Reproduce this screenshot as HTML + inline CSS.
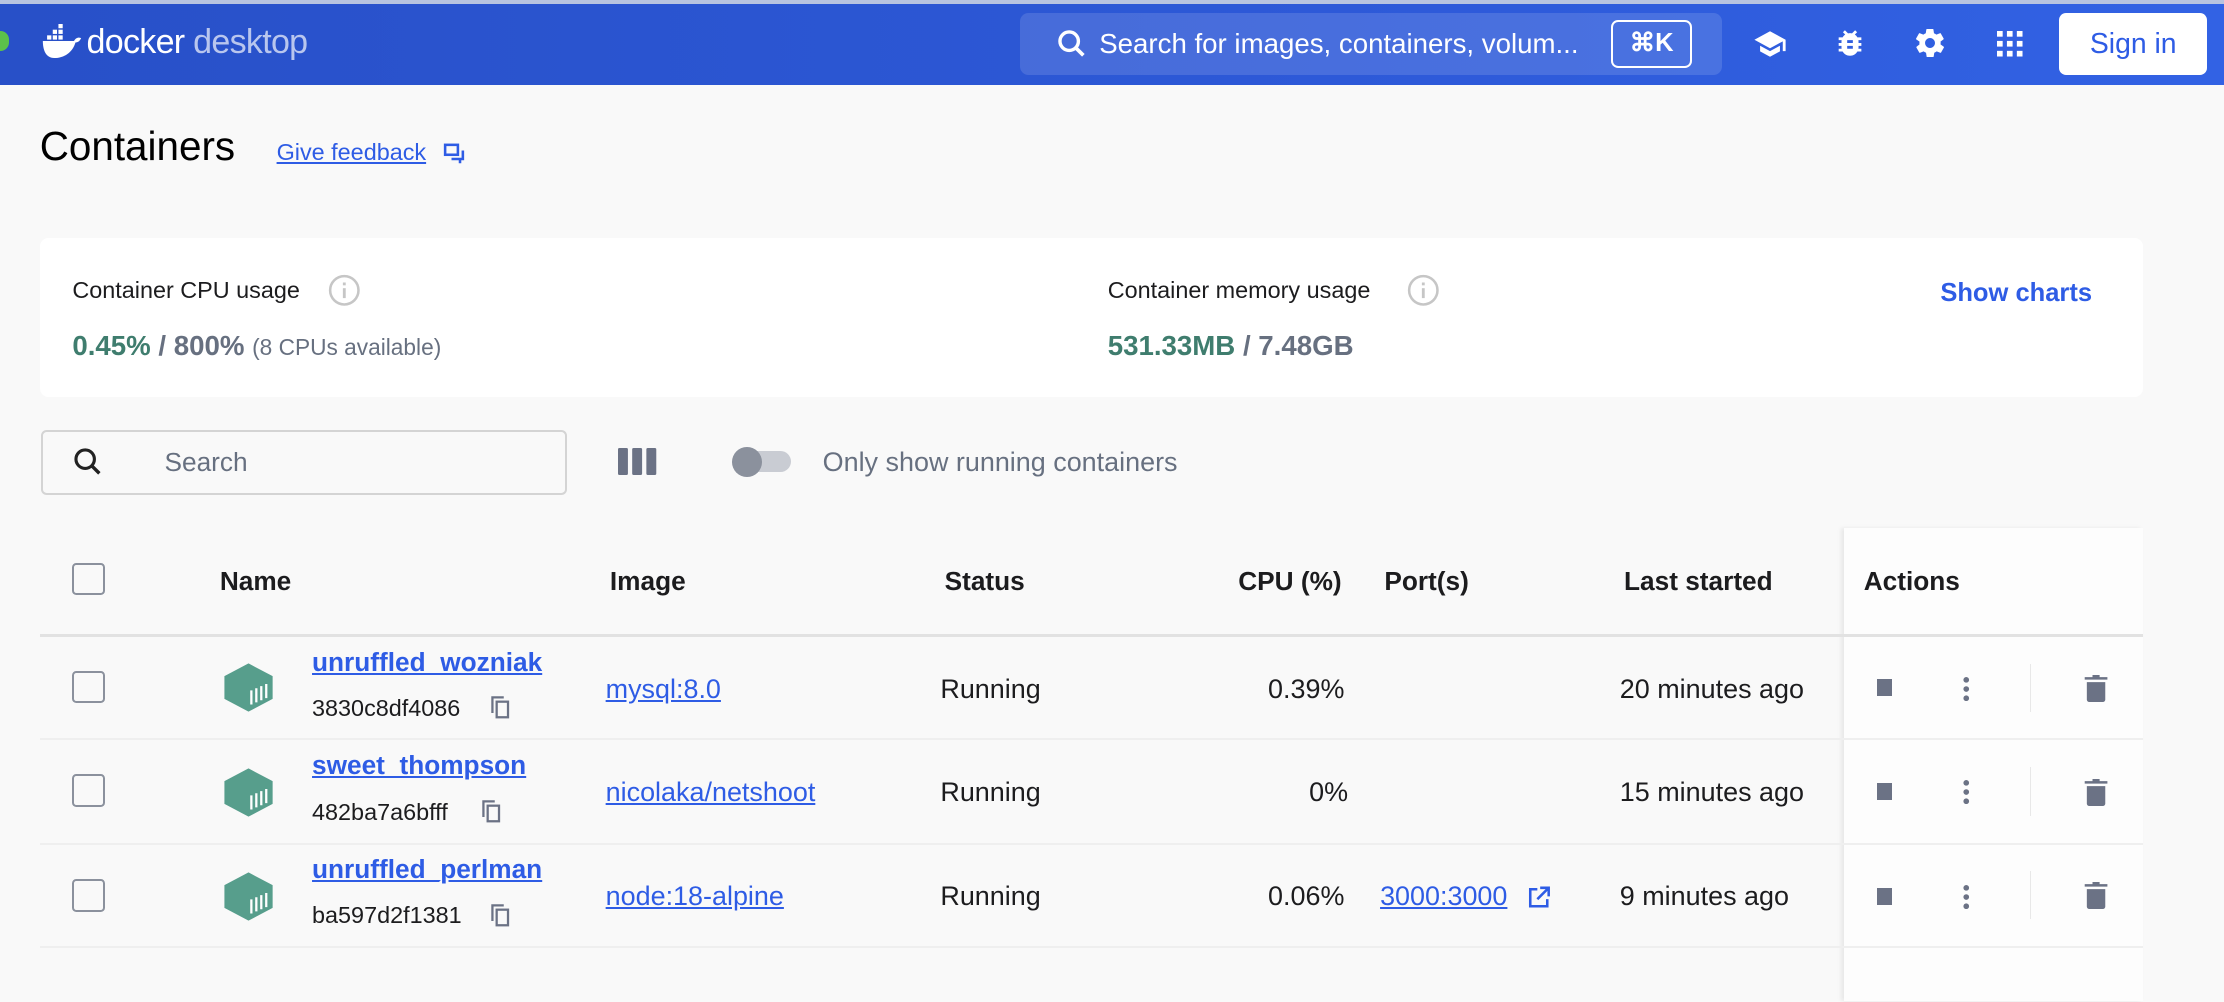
<!DOCTYPE html>
<html><head><meta charset="utf-8"><style>
html,body{margin:0;padding:0;width:2224px;height:1002px;overflow:hidden;background:#f9f9f9}
#w{position:absolute;left:0;top:0;width:1568px;height:706px;zoom:1.41837;font-family:"Liberation Sans",sans-serif;color:#1c1c1e}
.a{position:absolute;white-space:nowrap}
.hdr{left:0;top:0;width:1568px;height:60px;background:linear-gradient(90deg,#2850c8,#2d59d8 60%,#3262e4);border-top:3px solid #b8c4e0;box-sizing:border-box}
.lnk{color:#2e5ce5;text-decoration:underline}
.cb{position:absolute;width:20px;height:20px;border:2px solid #8b919d;border-radius:3px}
.th{font-size:18.5px;font-weight:bold;top:399px}
.cell{font-size:19px}
</style></head><body><div id="w">
<div class="a hdr"></div>
<div class="a" style="left:-6px;top:22px;width:12px;height:14px;border-radius:7px;background:#5cc24a"></div>
<svg class="a" style="left:28px;top:17px" width="30" height="26" viewBox="0 0 30 26"><path fill="#fff" d="M2 12h22c1-2 3-3 5-2-1 2-2 3-4 3-2 7-8 11-15 11C4 24 2 18 2 12z"/><rect x="5" y="8" width="3" height="3" fill="#fff"/><rect x="9" y="8" width="3" height="3" fill="#fff"/><rect x="13" y="8" width="3" height="3" fill="#fff"/><rect x="9" y="4" width="3" height="3" fill="#fff"/><rect x="13" y="4" width="3" height="3" fill="#fff"/><rect x="13" y="0" width="3" height="3" fill="#fff"/></svg>
<div class="a" style="left:61px;top:16px;font-size:24px;color:#fff;letter-spacing:-0.5px">docker <span style="color:#b9c6ee">desktop</span></div>
<div class="a" style="left:719px;top:9px;width:495px;height:44px;border-radius:6px;background:rgba(255,255,255,0.13)"></div>
<svg class="a" style="left:744px;top:19px" width="24" height="24" viewBox="0 0 24 24"><circle cx="10" cy="10" r="6.5" fill="none" stroke="#fff" stroke-width="2.4"/><path d="M15 15l5 5" stroke="#fff" stroke-width="2.6"/></svg>
<div class="a" style="left:775px;top:20px;font-size:19.5px;color:#fff">Search for images, containers, volum...</div>
<div class="a" style="left:1136px;top:14px;width:54px;height:31px;border:1.5px solid #fff;border-radius:5px;color:#fff;font-size:18px;font-weight:bold;text-align:center;line-height:31px">⌘K</div>
<svg class="a" style="left:1236px;top:19px" width="24" height="24" viewBox="0 0 24 24"><path fill="#fff" d="M12 3L1 9l11 6 9-4.9V17h2V9zM5 13.2v4L12 21l7-3.8v-4L12 17z"/></svg>
<svg class="a" style="left:1292px;top:18px" width="24" height="24" viewBox="0 0 24 24"><path fill="#fff" d="M20 8h-2.8c-.5-.8-1.1-1.5-1.8-2L17 4.4 15.6 3l-2.2 2.2C13 5.1 12.5 5 12 5s-1 .1-1.4.2L8.4 3 7 4.4 8.6 6c-.7.5-1.3 1.2-1.8 2H4v2h2.1c-.1.3-.1.7-.1 1v1H4v2h2v1c0 .3 0 .7.1 1H4v2h2.8c1 1.8 3 3 5.2 3s4.2-1.2 5.2-3H20v-2h-2.1c.1-.3.1-.7.1-1v-1h2v-2h-2v-1c0-.3 0-.7-.1-1H20zm-6 8h-4v-2h4zm0-4h-4v-2h4z"/></svg>
<svg class="a" style="left:1349px;top:18px" width="24" height="24" viewBox="0 0 24 24"><path fill="#fff" d="M19.4 13c0-.3.1-.6.1-1s0-.7-.1-1l2.1-1.6c.2-.2.2-.4.1-.6l-2-3.5c-.1-.2-.4-.3-.6-.2l-2.5 1c-.5-.4-1.1-.7-1.700-1l-.4-2.6c0-.3-.2-.4-.5-.4h-4c-.2 0-.5.2-.5.4l-.4 2.6c-.6.3-1.2.6-1.7 1l-2.5-1c-.2-.1-.5 0-.6.2l-2 3.5c-.1.2-.1.5.1.6L4.6 11c0 .3-.1.7-.1 1s0 .7.1 1l-2.1 1.6c-.2.2-.2.4-.1.6l2 3.5c.1.2.4.3.6.2l2.5-1c.5.4 1.1.7 1.7 1l.4 2.6c0 .3.2.4.5.4h4c.2 0 .5-.2.5-.4l.4-2.6c.6-.3 1.2-.6 1.7-1l2.5 1c.2.1.5 0 .6-.2l2-3.5c.1-.2.1-.5-.1-.6zM12 15.5c-1.900 0-3.5-1.6-3.5-3.5s1.6-3.5 3.5-3.5 3.5 1.6 3.5 3.5-1.6 3.5-3.5 3.5z"/></svg>
<svg class="a" style="left:1408px;top:22px" width="18" height="18" viewBox="0 0 18 18"><g fill="#fff"><rect x="0" y="0" width="4" height="4"/><rect x="7" y="0" width="4" height="4"/><rect x="14" y="0" width="4" height="4"/><rect x="0" y="7" width="4" height="4"/><rect x="7" y="7" width="4" height="4"/><rect x="14" y="7" width="4" height="4"/><rect x="0" y="14" width="4" height="4"/><rect x="7" y="14" width="4" height="4"/><rect x="14" y="14" width="4" height="4"/></g></svg>
<div class="a" style="left:1452px;top:9px;width:104px;height:44px;background:#fff;border-radius:5px;color:#2e5ce5;font-size:20px;text-align:center;line-height:44px">Sign in</div>

<div class="a" style="left:28px;top:87px;font-size:28.5px;color:#000">Containers</div>
<div class="a lnk" style="left:195px;top:98px;font-size:16.5px">Give feedback</div>
<svg class="a" style="left:312px;top:100px" width="16" height="16" viewBox="0 0 16 16"><rect x="1.5" y="2" width="9" height="7" fill="none" stroke="#2e5ce5" stroke-width="1.8"/><path d="M6 12h8V6M12 12v3" fill="none" stroke="#2e5ce5" stroke-width="1.8"/></svg>

<div class="a" style="left:28px;top:168px;width:1483px;height:112px;background:#fff;border-radius:6px"></div>
<div class="a" style="left:51px;top:195px;font-size:16.5px">Container CPU usage</div>
<svg class="a" style="left:231px;top:193px" width="23" height="23" viewBox="0 0 23 23"><circle cx="11.5" cy="11.5" r="10" fill="none" stroke="#c6c6c6" stroke-width="1.8"/><rect x="10.5" y="10" width="2" height="7" fill="#c6c6c6"/><rect x="10.5" y="6" width="2" height="2" fill="#c6c6c6"/></svg>
<div class="a" style="left:51px;top:233px;font-size:19.5px;color:#677080;font-weight:bold"><span style="color:#3f7d6e">0.45%</span> / 800% <span style="font-size:16px;font-weight:normal">(8 CPUs available)</span></div>
<div class="a" style="left:781px;top:195px;font-size:16.5px">Container memory usage</div>
<svg class="a" style="left:992px;top:193px" width="23" height="23" viewBox="0 0 23 23"><circle cx="11.5" cy="11.5" r="10" fill="none" stroke="#c6c6c6" stroke-width="1.8"/><rect x="10.5" y="10" width="2" height="7" fill="#c6c6c6"/><rect x="10.5" y="6" width="2" height="2" fill="#c6c6c6"/></svg>
<div class="a" style="left:781px;top:233px;font-size:19.5px;color:#677080;font-weight:bold"><span style="color:#3f7d6e">531.33MB</span> / 7.48GB</div>
<div class="a" style="left:1368px;top:197px;font-size:18px;color:#2e5ce5;font-weight:bold">Show charts</div>

<div class="a" style="left:29px;top:303px;width:368px;height:43px;border:1.5px solid #d4d4d4;border-radius:4px"></div>
<svg class="a" style="left:50px;top:314px" width="24" height="24" viewBox="0 0 24 24"><circle cx="10" cy="10" r="6.5" fill="none" stroke="#222" stroke-width="2.2"/><path d="M15 15l5 5" stroke="#222" stroke-width="2.4"/></svg>
<div class="a" style="left:116px;top:315px;font-size:18.5px;color:#677080">Search</div>
<svg class="a" style="left:436px;top:316px" width="27" height="19" viewBox="0 0 27 19"><g fill="#6b7285"><rect x="0" y="0" width="7" height="19" rx="1"/><rect x="10" y="0" width="7" height="19" rx="1"/><rect x="20" y="0" width="7" height="19" rx="1"/></g></svg>
<div class="a" style="left:518px;top:318px;width:40px;height:15px;border-radius:8px;background:#c9ccd3"></div>
<div class="a" style="left:516px;top:315px;width:21px;height:21px;border-radius:50%;background:#8b919d"></div>
<div class="a" style="left:580px;top:315px;font-size:19px;color:#677080">Only show running containers</div>

<div class="a" style="left:1300px;top:372px;width:211px;height:334px;background:#fdfdfd;box-shadow:-2px 0 3px rgba(0,0,0,0.07)"></div>
<div class="a" style="left:28px;top:447px;width:1483px;height:2px;background:#e2e2e2"></div>
<div class="a" style="left:28px;top:520px;width:1483px;height:1.5px;background:#efefef"></div>
<div class="a" style="left:28px;top:594px;width:1483px;height:1.5px;background:#efefef"></div>
<div class="a" style="left:28px;top:667px;width:1483px;height:1.5px;background:#efefef"></div>

<div class="cb" style="left:51px;top:397px"></div>
<div class="a th" style="left:155px">Name</div>
<div class="a th" style="left:430px">Image</div>
<div class="a th" style="left:666px">Status</div>
<div class="a th" style="left:873px">CPU (%)</div>
<div class="a th" style="left:976px">Port(s)</div>
<div class="a th" style="left:1145px">Last started</div>
<div class="a th" style="left:1314px">Actions</div>

<div class="cb" style="left:51px;top:473px"></div>
<svg class="a" style="left:157px;top:467px" width="36" height="36" viewBox="0 0 36 36"><path d="M18 1l17 9v16l-17 9-17-9V10z" fill="#579e8c"/><g stroke="#fff" stroke-width="1.6"><path d="M20 20v10M23.5 18.5v10M27 17v10M30.5 15.5v10"/></g></svg>
<div class="a lnk" style="left:220px;top:456px;font-size:18.5px;font-weight:bold">unruffled_wozniak</div>
<div class="a" style="left:220px;top:490px;font-size:16.5px">3830c8df4086</div>
<svg class="a" style="left:346px;top:491px" width="14" height="17" viewBox="0 0 14 17"><path d="M1 12V1h8" fill="none" stroke="#6b7285" stroke-width="1.6"/><rect x="4" y="4" width="8" height="11" fill="none" stroke="#6b7285" stroke-width="1.6"/></svg>
<div class="a lnk cell" style="left:427px;top:475px">mysql:8.0</div>
<div class="a cell" style="left:663px;top:475px">Running</div>
<div class="a cell" style="left:894px;top:475px">0.39%</div>
<div class="a cell" style="left:1142px;top:475px">20 minutes ago</div>

<div class="cb" style="left:51px;top:546px"></div>
<svg class="a" style="left:157px;top:541px" width="36" height="36" viewBox="0 0 36 36"><path d="M18 1l17 9v16l-17 9-17-9V10z" fill="#579e8c"/><g stroke="#fff" stroke-width="1.6"><path d="M20 20v10M23.5 18.5v10M27 17v10M30.5 15.5v10"/></g></svg>
<div class="a lnk" style="left:220px;top:529px;font-size:18.5px;font-weight:bold">sweet_thompson</div>
<div class="a" style="left:220px;top:563px;font-size:16.5px">482ba7a6bfff</div>
<svg class="a" style="left:340px;top:564px" width="14" height="17" viewBox="0 0 14 17"><path d="M1 12V1h8" fill="none" stroke="#6b7285" stroke-width="1.6"/><rect x="4" y="4" width="8" height="11" fill="none" stroke="#6b7285" stroke-width="1.6"/></svg>
<div class="a lnk cell" style="left:427px;top:548px">nicolaka/netshoot</div>
<div class="a cell" style="left:663px;top:548px">Running</div>
<div class="a cell" style="left:923px;top:548px">0%</div>
<div class="a cell" style="left:1142px;top:548px">15 minutes ago</div>

<div class="cb" style="left:51px;top:620px"></div>
<svg class="a" style="left:157px;top:614px" width="36" height="36" viewBox="0 0 36 36"><path d="M18 1l17 9v16l-17 9-17-9V10z" fill="#579e8c"/><g stroke="#fff" stroke-width="1.6"><path d="M20 20v10M23.5 18.5v10M27 17v10M30.5 15.5v10"/></g></svg>
<div class="a lnk" style="left:220px;top:602px;font-size:18.5px;font-weight:bold">unruffled_perlman</div>
<div class="a" style="left:220px;top:636px;font-size:16.5px">ba597d2f1381</div>
<svg class="a" style="left:346px;top:637px" width="14" height="17" viewBox="0 0 14 17"><path d="M1 12V1h8" fill="none" stroke="#6b7285" stroke-width="1.6"/><rect x="4" y="4" width="8" height="11" fill="none" stroke="#6b7285" stroke-width="1.6"/></svg>
<div class="a lnk cell" style="left:427px;top:621px">node:18-alpine</div>
<div class="a cell" style="left:663px;top:621px">Running</div>
<div class="a cell" style="left:894px;top:621px">0.06%</div>
<div class="a lnk cell" style="left:973px;top:621px">3000:3000</div>
<svg class="a" style="left:1076px;top:624px" width="18" height="18" viewBox="0 0 18 18"><path d="M8 3H3v12h12v-5" fill="none" stroke="#2e5ce5" stroke-width="1.8"/><path d="M10 2h6v6M16 2L8 10" fill="none" stroke="#2e5ce5" stroke-width="1.8"/></svg>
<div class="a cell" style="left:1142px;top:621px">9 minutes ago</div>

<div class="a" style="left:1323px;top:479px;width:11px;height:12px;background:#6b7285"></div>
<svg class="a" style="left:1383px;top:477px" width="6" height="17" viewBox="0 0 6 17"><g fill="#6b7285"><circle cx="3" cy="2" r="2"/><circle cx="3" cy="8.5" r="2"/><circle cx="3" cy="15" r="2"/></g></svg>
<div class="a" style="left:1431px;top:468px;width:1px;height:34px;background:#e8e8e8"></div>
<svg class="a" style="left:1469px;top:476px" width="17" height="19" viewBox="0 0 17 19"><path fill="#6b7285" d="M6 0h5v1.5h5.5v1.8H.5V1.5H6zM2 5h13v12.5c0 .8-.7 1.5-1.5 1.5h-10C2.7 19 2 18.3 2 17.5z"/></svg>
<div class="a" style="left:1323px;top:552px;width:11px;height:12px;background:#6b7285"></div>
<svg class="a" style="left:1383px;top:550px" width="6" height="17" viewBox="0 0 6 17"><g fill="#6b7285"><circle cx="3" cy="2" r="2"/><circle cx="3" cy="8.5" r="2"/><circle cx="3" cy="15" r="2"/></g></svg>
<div class="a" style="left:1431px;top:541px;width:1px;height:34px;background:#e8e8e8"></div>
<svg class="a" style="left:1469px;top:549px" width="17" height="19" viewBox="0 0 17 19"><path fill="#6b7285" d="M6 0h5v1.5h5.5v1.8H.5V1.5H6zM2 5h13v12.5c0 .8-.7 1.5-1.5 1.5h-10C2.7 19 2 18.3 2 17.5z"/></svg>
<div class="a" style="left:1323px;top:626px;width:11px;height:12px;background:#6b7285"></div>
<svg class="a" style="left:1383px;top:624px" width="6" height="17" viewBox="0 0 6 17"><g fill="#6b7285"><circle cx="3" cy="2" r="2"/><circle cx="3" cy="8.5" r="2"/><circle cx="3" cy="15" r="2"/></g></svg>
<div class="a" style="left:1431px;top:614px;width:1px;height:34px;background:#e8e8e8"></div>
<svg class="a" style="left:1469px;top:622px" width="17" height="19" viewBox="0 0 17 19"><path fill="#6b7285" d="M6 0h5v1.5h5.5v1.8H.5V1.5H6zM2 5h13v12.5c0 .8-.7 1.5-1.5 1.5h-10C2.7 19 2 18.3 2 17.5z"/></svg>
</div></body></html>
